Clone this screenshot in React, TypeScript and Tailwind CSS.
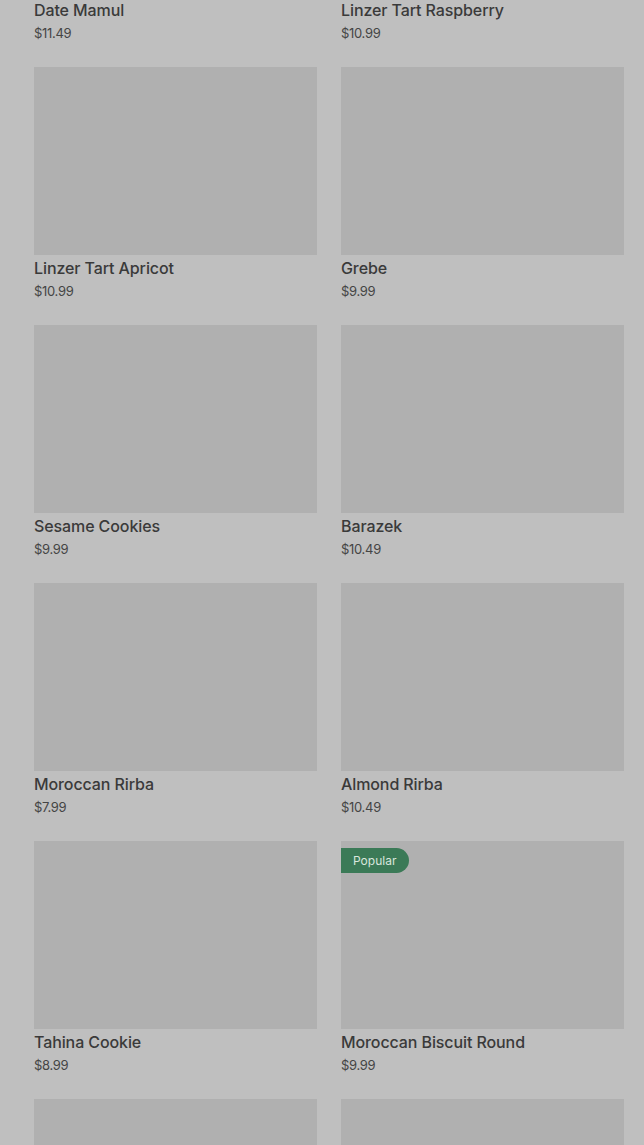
import React from 'react';

type Product = { name?: string; price?: string; badge?: string };

const products: Product[] = [
  { name: 'Date Mamul', price: '$11.49' },
  { name: 'Linzer Tart Raspberry', price: '$10.99' },
  { name: 'Linzer Tart Apricot', price: '$10.99' },
  { name: 'Grebe', price: '$9.99' },
  { name: 'Sesame Cookies', price: '$9.99' },
  { name: 'Barazek', price: '$10.49' },
  { name: 'Moroccan Rirba', price: '$7.99' },
  { name: 'Almond Rirba', price: '$10.49' },
  { name: 'Tahina Cookie', price: '$8.99' },
  { name: 'Moroccan Biscuit Round', price: '$9.99', badge: 'Popular' },
  {},
  {},
];

const App: React.FC = () => {
  return (
    <div
      className="h-[1145px] w-full overflow-hidden bg-[#bfbfbf]"
      style={{ fontFamily: 'Inter, "Noto Sans", sans-serif' }}
    >
      {/* product grid, scrolled partway down */}
      <div className="grid grid-cols-2 gap-x-[24px] pl-[34px] pr-[20px] mt-[-191px]">
        {products.map((p, i) => (
          <div key={i} className="pb-[25px]">
            <div className="relative h-[188px] bg-[#b0b0b0]">
              {p.badge && (
                <span className="absolute top-[7px] left-0 h-[25px] flex items-center pl-[12px] pr-[13px] rounded-r-full bg-[#3b7a57] text-[12px] text-[#d9e6dd]">
                  {p.badge}
                </span>
              )}
            </div>
            {p.name && (
              <>
                <p className="mt-[3px] text-[16px] leading-[20px] font-medium tracking-[-0.1px] text-[#3a3a3a]">{p.name}</p>
                <p className="mt-[4px] text-[13px] leading-[18px] text-[#454545] tracking-[-0.3px]">{p.price}</p>
              </>
            )}
          </div>
        ))}
      </div>
    </div>
  );
};

export default App;
